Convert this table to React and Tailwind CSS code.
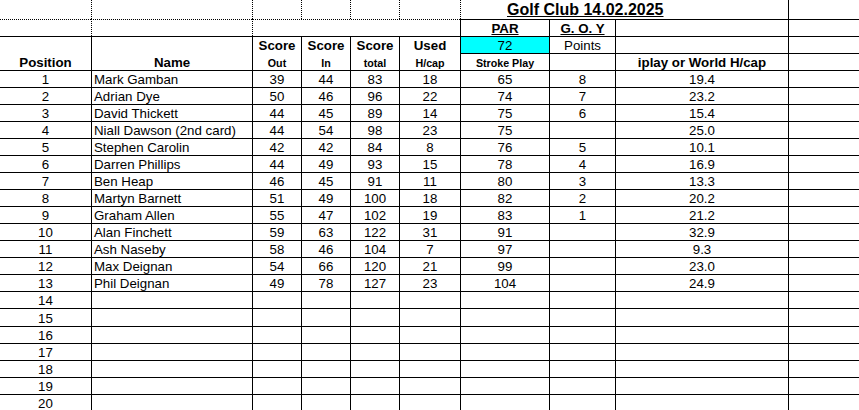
const players = [
  { name: "Mark Gamban", out: 39, inn: 44, total: 83, hcap: 18, stroke: 65, goy: 8, world: "19.4" },
  { name: "Adrian Dye", out: 50, inn: 46, total: 96, hcap: 22, stroke: 74, goy: 7, world: "23.2" },
  { name: "David Thickett", out: 44, inn: 45, total: 89, hcap: 14, stroke: 75, goy: 6, world: "15.4" },
  { name: "Niall Dawson (2nd card)", out: 44, inn: 54, total: 98, hcap: 23, stroke: 75, goy: "", world: "25.0" },
  { name: "Stephen Carolin", out: 42, inn: 42, total: 84, hcap: 8, stroke: 76, goy: 5, world: "10.1" },
  { name: "Darren Phillips", out: 44, inn: 49, total: 93, hcap: 15, stroke: 78, goy: 4, world: "16.9" },
  { name: "Ben Heap", out: 46, inn: 45, total: 91, hcap: 11, stroke: 80, goy: 3, world: "13.3" },
  { name: "Martyn Barnett", out: 51, inn: 49, total: 100, hcap: 18, stroke: 82, goy: 2, world: "20.2" },
  { name: "Graham Allen", out: 55, inn: 47, total: 102, hcap: 19, stroke: 83, goy: 1, world: "21.2" },
  { name: "Alan Finchett", out: 59, inn: 63, total: 122, hcap: 31, stroke: 91, goy: "", world: "32.9" },
  { name: "Ash Naseby", out: 58, inn: 46, total: 104, hcap: 7, stroke: 97, goy: "", world: "9.3" },
  { name: "Max Deignan", out: 54, inn: 66, total: 120, hcap: 21, stroke: 99, goy: "", world: "23.0" },
  { name: "Phil Deignan", out: 49, inn: 78, total: 127, hcap: 23, stroke: 104, goy: "", world: "24.9" },
];

// 20 positions on the sheet, the last ones are empty
const rows = Array.from({ length: 20 }, (_, i) => ({ pos: i + 1, ...(players[i] || {}) }));

// spreadsheet cell: text sits on the bottom like Excel does
const Cell = ({ className = "", children }) => (
  <div
    className={`flex items-end justify-center overflow-hidden whitespace-nowrap leading-[14px] border-black ${className}`}
  >
    {children}
  </div>
);

const App = () => {
  return (
    <div className="w-[859px] h-[410px] overflow-hidden bg-white text-black font-['Liberation_Sans',Arial,sans-serif] text-[13.3px]">
      <div className="grid grid-cols-[91px_161px_49px_49px_49px_61px_89px_66px_173px_71px]">
        {/* Row 1 - title */}
        <Cell className="h-[19px]" />
        <Cell className="h-[19px] border-l border-dotted" />
        <Cell className="h-[19px] border-l border-dotted" />
        <Cell className="h-[19px] border-l border-dotted" />
        <Cell className="h-[19px] border-l border-dotted" />
        <Cell className="h-[19px] border-l border-dotted" />
        <Cell className="h-[19px] col-span-3 border-l border-dotted !items-start !justify-start pl-[46px]">
          <span className="text-[16px] font-bold underline leading-[19px]">Golf Club 14.02.2025</span>
        </Cell>
        <Cell className="h-[19px] border-l" />

        {/* Row 2 */}
        <Cell className="h-[17px] border-t border-dotted" />
        <Cell className="h-[17px] border-l border-t border-dotted" />
        <Cell className="h-[17px] col-span-4 border-l border-t border-dotted" />
        <Cell className="h-[17px] border-l border-t font-bold underline">PAR</Cell>
        <Cell className="h-[17px] border-l border-t font-bold underline">G. O. Y</Cell>
        <Cell className="h-[17px] border-l border-t" />
        <Cell className="h-[17px] border-l border-t" />

        {/* Row 3 */}
        <Cell className="h-[17px] border-t" />
        <Cell className="h-[17px] border-l border-t" />
        <Cell className="h-[17px] border-l border-t font-bold">Score</Cell>
        <Cell className="h-[17px] border-l border-t font-bold">Score</Cell>
        <Cell className="h-[17px] border-l border-t font-bold">Score</Cell>
        <Cell className="h-[17px] border-l border-t font-bold">Used</Cell>
        <Cell className="h-[17px] border-l border-t bg-[#00ffff]">72</Cell>
        <Cell className="h-[17px] border-l border-t">Points</Cell>
        <Cell className="h-[17px] border-l border-t" />
        <Cell className="h-[17px] border-l border-t" />

        {/* Row 4 */}
        <Cell className="h-[17px] font-bold">Position</Cell>
        <Cell className="h-[17px] border-l font-bold">Name</Cell>
        <Cell className="h-[17px] border-l font-bold text-[10.7px]">Out</Cell>
        <Cell className="h-[17px] border-l font-bold text-[10.7px]">In</Cell>
        <Cell className="h-[17px] border-l font-bold text-[10.7px]">total</Cell>
        <Cell className="h-[17px] border-l font-bold text-[10.7px]">H/cap</Cell>
        <Cell className="h-[17px] border-l border-t font-bold text-[10.7px]">Stroke Play</Cell>
        <Cell className="h-[17px] border-l border-t" />
        <Cell className="h-[17px] border-l border-t font-bold">iplay or World H/cap</Cell>
        <Cell className="h-[17px] border-l border-t" />

        {/* Player rows */}
        {rows.map((r, i) => {
          const h = i === 14 ? "h-[18px]" : "h-[17px]";
          return [
            <Cell key={`a${i}`} className={`${h} border-t`}>{r.pos}</Cell>,
            <Cell key={`b${i}`} className={`${h} border-l border-t !justify-start pl-[2px]`}>{r.name}</Cell>,
            <Cell key={`c${i}`} className={`${h} border-l border-t`}>{r.out}</Cell>,
            <Cell key={`d${i}`} className={`${h} border-l border-t`}>{r.inn}</Cell>,
            <Cell key={`e${i}`} className={`${h} border-l border-t`}>{r.total}</Cell>,
            <Cell key={`f${i}`} className={`${h} border-l border-t`}>{r.hcap}</Cell>,
            <Cell key={`g${i}`} className={`${h} border-l border-t`}>{r.stroke}</Cell>,
            <Cell key={`h${i}`} className={`${h} border-l border-t`}>{r.goy}</Cell>,
            <Cell key={`i${i}`} className={`${h} border-l border-t`}>{r.world}</Cell>,
            <Cell key={`j${i}`} className={`${h} border-l border-t`} />,
          ];
        })}
      </div>
    </div>
  );
};

export default App;
